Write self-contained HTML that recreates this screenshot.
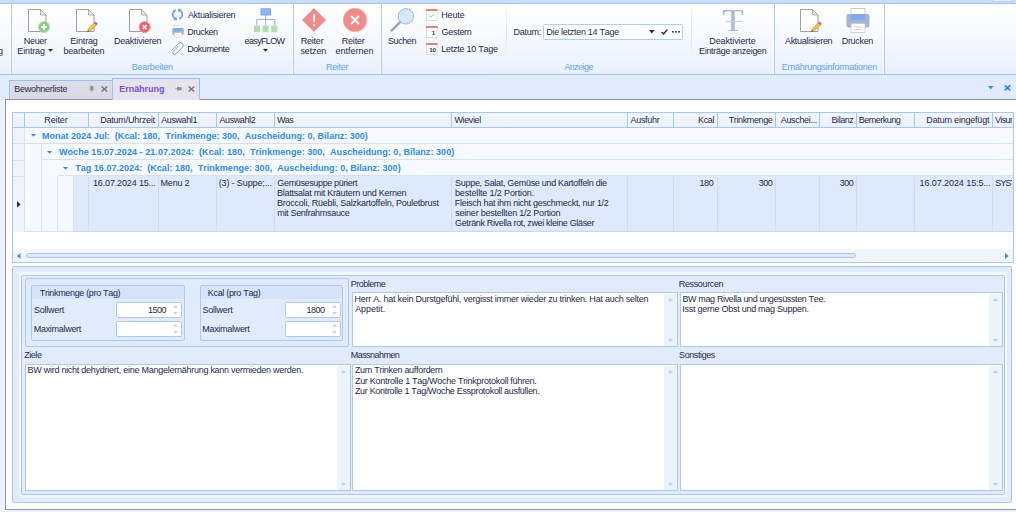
<!DOCTYPE html>
<html><head><meta charset="utf-8">
<style>
*{box-sizing:border-box;margin:0;padding:0}
html,body{width:1016px;height:512px;overflow:hidden;background:#ecf2fd}
body{font-family:"Liberation Sans",sans-serif;font-size:9px;letter-spacing:-0.28px;color:#1e2a4a;position:relative;line-height:10px;font-kerning:none}
.a{position:absolute;white-space:pre}
.c{text-align:center}
.r{text-align:right}
#top{left:0;top:0;width:1016px;height:4px;background:#cadcfa;border-bottom:1px solid #a6c5f6}
#rib{left:0;top:4px;width:1016px;height:70px;background:linear-gradient(#ffffff 0%,#f7fafe 40%,#ebf2fd 100%)}
.sep{width:1px;top:4px;height:70px;background:#b0ccf6}
.sepl{width:1px;top:8px;height:50px;background:linear-gradient(#f3f7fe,#d3e2f9,#f3f7fe)}
.gl{color:#5fa2f3}
#tabs{left:0;top:75px;width:1016px;height:25px;background:#e1ebfd}
.tab{top:80px;height:20px;background:linear-gradient(#dedeea,#d9d9e6);border:1px solid #9dbdf3;border-bottom:none}
#content{left:5px;top:99px;width:1016px;height:411px;background:#fff;border:1px solid #949292}
.gt{color:#2f8bf0}
.pn{border:1px solid #adc8f5;background:#e1ebfc}
.ta{border:1px solid #adc8f5;background:#fff}
.sb{width:13px;background:#edf3fd}
.in{border:1px solid #adc8f5;background:#fff;height:15px;border-radius:1.5px}
</style></head><body>
<div class="a" id="top"></div>
<div class="a" style="left:992px;top:0;width:21px;height:2px;background:#e6ebf4;border:1px solid #bccfee;border-top:none"></div>
<div class="a" id="rib"></div>
<div class="a" style="left:0;top:60px;width:1016px;height:14px;background:linear-gradient(#eef4fe,#e8f0fd)"></div>
<div class="a" style="left:0;top:73.5px;width:1016px;height:1.5px;background:#a3c4f6"></div>
<div class="a" style="left:10px;top:5px;width:1px;height:69px;background:rgba(255,255,255,0.7)"></div>
<div class="a sep" style="left:11px"></div>
<div class="a" style="left:292px;top:5px;width:1px;height:69px;background:rgba(255,255,255,0.7)"></div>
<div class="a sep" style="left:293px"></div>
<div class="a" style="left:380px;top:5px;width:1px;height:69px;background:rgba(255,255,255,0.7)"></div>
<div class="a sep" style="left:381px"></div>
<div class="a" style="left:773px;top:5px;width:1px;height:69px;background:rgba(255,255,255,0.7)"></div>
<div class="a sep" style="left:774px"></div>
<div class="a" style="left:883px;top:5px;width:1px;height:69px;background:rgba(255,255,255,0.7)"></div>
<div class="a sep" style="left:884px"></div>
<div class="a sepl" style="left:506px"></div>
<div class="a sepl" style="left:691px"></div>
<div class="a" style="left:-2px;top:46px">g</div>
<div class="a " style="left:23.76px;top:36px;letter-spacing:-0.306px;">Neuer</div>
<div class="a " style="left:17.36px;top:46px;letter-spacing:-0.150px;">Eintrag</div>
<svg width="5" height="3" viewBox="0 0 5 3" style="position:absolute;left:47.9px;top:49.3px;overflow:visible"><path d="M0 0H5L2.5 2.8Z" fill="#1e2a4a"/></svg>
<div class="a " style="left:70.26px;top:36px;letter-spacing:-0.158px;">Eintrag</div>
<div class="a " style="left:63.42px;top:46px;letter-spacing:-0.152px;">bearbeiten</div>
<div class="a " style="left:114.01px;top:36px;letter-spacing:-0.223px;">Deaktivieren</div>
<div class="a " style="left:187.88px;top:10px;letter-spacing:-0.319px;">Aktualisieren</div>
<div class="a " style="left:187.16px;top:27px;letter-spacing:-0.432px;">Drucken</div>
<div class="a " style="left:187.16px;top:44px;letter-spacing:-0.442px;">Dokumente</div>
<div class="a " style="left:244.62px;top:36px;letter-spacing:-0.657px;">easyFLOW</div>
<svg width="5" height="3" viewBox="0 0 5 3" style="position:absolute;left:262.6px;top:48.8px;overflow:visible"><path d="M0 0H5L2.5 2.8Z" fill="#1e2a4a"/></svg>
<div class="a " style="left:300.66px;top:36px;letter-spacing:-0.204px;">Reiter</div>
<div class="a " style="left:300.50px;top:46px;letter-spacing:-0.136px;">setzen</div>
<div class="a " style="left:341.76px;top:36px;letter-spacing:-0.204px;">Reiter</div>
<div class="a " style="left:335.52px;top:46px;letter-spacing:0.005px;">entfernen</div>
<div class="a " style="left:387.99px;top:36px;letter-spacing:-0.406px;">Suchen</div>
<div class="a " style="left:441.26px;top:10px;letter-spacing:-0.157px;">Heute</div>
<div class="a " style="left:441.55px;top:27px;letter-spacing:-0.288px;">Gestern</div>
<div class="a " style="left:441.26px;top:44px;letter-spacing:-0.262px;">Letzte 10 Tage</div>
<div class="a " style="left:513.51px;top:27px;letter-spacing:-0.240px;">Datum:</div>
<div class="a in" style="left:543px;top:24px;width:140px;height:15.5px;border-color:#b0ccf6"></div>
<div class="a " style="left:546.26px;top:27px;letter-spacing:-0.287px;">Die letzten 14 Tage</div>
<div class="a " style="left:709.26px;top:36px;letter-spacing:-0.103px;">Deaktivierte</div>
<div class="a " style="left:699.01px;top:46px;letter-spacing:-0.296px;">Einträge anzeigen</div>
<div class="a " style="left:784.98px;top:36px;letter-spacing:-0.327px;">Aktualisieren</div>
<div class="a " style="left:841.76px;top:36px;letter-spacing:-0.323px;">Drucken</div>
<div class="a gl" style="left:131.76px;top:62px;letter-spacing:-0.245px;">Bearbeiten</div>
<div class="a gl" style="left:326.01px;top:62px;letter-spacing:-0.324px;">Reiter</div>
<div class="a gl" style="left:564.23px;top:62px;letter-spacing:-0.559px;">Anzeige</div>
<div class="a gl" style="left:781.76px;top:62px;letter-spacing:-0.249px;">Ernährungsinformationen</div>
<div class="a" id="tabs"></div>
<div class="a" id="content"></div>
<div class="a tab" style="left:9px;width:103.5px;height:19px"></div>
<div class="a tab" style="left:112px;width:88px;top:78px;height:22px;background:#e4e3ee"></div>
<div class="a " style="left:14.26px;top:84px;letter-spacing:-0.283px;">Bewohnerliste</div>
<div class="a " style="left:119.15px;top:83.5px;letter-spacing:-0.006px;font-weight:bold;color:#7a4fd0;">Ernährung</div>
<div class="a" style="left:12px;top:112.0px;width:1001px;height:151px;background:#fff"></div>
<div class="a" style="left:12.5px;top:112.0px;width:1000.5px;height:15.6px;background:linear-gradient(#f3f7fe,#eaf1fd);border-bottom:1px solid #a9c6f5"></div>
<div class="a" style="left:24.0px;top:112.5px;width:1px;height:15px;background:#a9c6f5"></div>
<div class="a" style="left:88.0px;top:112.5px;width:1px;height:15px;background:#a9c6f5"></div>
<div class="a" style="left:157.5px;top:112.5px;width:1px;height:15px;background:#a9c6f5"></div>
<div class="a" style="left:216.0px;top:112.5px;width:1px;height:15px;background:#a9c6f5"></div>
<div class="a" style="left:274.0px;top:112.5px;width:1px;height:15px;background:#a9c6f5"></div>
<div class="a" style="left:451.0px;top:112.5px;width:1px;height:15px;background:#a9c6f5"></div>
<div class="a" style="left:626.5px;top:112.5px;width:1px;height:15px;background:#a9c6f5"></div>
<div class="a" style="left:673.0px;top:112.5px;width:1px;height:15px;background:#a9c6f5"></div>
<div class="a" style="left:716.5px;top:112.5px;width:1px;height:15px;background:#a9c6f5"></div>
<div class="a" style="left:774.5px;top:112.5px;width:1px;height:15px;background:#a9c6f5"></div>
<div class="a" style="left:818.5px;top:112.5px;width:1px;height:15px;background:#a9c6f5"></div>
<div class="a" style="left:856.0px;top:112.5px;width:1px;height:15px;background:#a9c6f5"></div>
<div class="a" style="left:914.0px;top:112.5px;width:1px;height:15px;background:#a9c6f5"></div>
<div class="a" style="left:992.0px;top:112.5px;width:1px;height:15px;background:#a9c6f5"></div>
<div class="a " style="left:44.26px;top:114.7px;letter-spacing:-0.124px;">Reiter</div>
<div class="a " style="left:100.26px;top:114.7px;letter-spacing:-0.226px;">Datum/Uhrzeit</div>
<div class="a " style="left:161.23px;top:114.7px;letter-spacing:-0.402px;">Auswahl1</div>
<div class="a " style="left:219.38px;top:114.7px;letter-spacing:-0.379px;">Auswahl2</div>
<div class="a " style="left:277.06px;top:114.7px;letter-spacing:-0.700px;">Was</div>
<div class="a " style="left:454.46px;top:114.7px;letter-spacing:-0.377px;">Wieviel</div>
<div class="a " style="left:630.48px;top:114.7px;letter-spacing:-0.292px;">Ausfuhr</div>
<div class="a " style="left:698.06px;top:114.7px;letter-spacing:-0.389px;">Kcal</div>
<div class="a " style="left:728.70px;top:114.7px;letter-spacing:-0.380px;">Trinkmenge</div>
<div class="a " style="left:780.73px;top:114.7px;letter-spacing:-0.326px;">Auschei...</div>
<div class="a " style="left:831.56px;top:114.7px;letter-spacing:-0.445px;">Bilanz</div>
<div class="a " style="left:858.66px;top:114.7px;letter-spacing:-0.488px;">Bemerkung</div>
<div class="a " style="left:926.36px;top:114.7px;letter-spacing:-0.210px;">Datum eingefügt</div>
<div class="a" style="left:994.9px;top:114.7px;width:17.6px;overflow:hidden;letter-spacing:-0.6px">Visum</div>
<div class="a" style="left:12.5px;top:127.5px;width:12.5px;height:104.7px;background:#f2f4f9;border-right:1px solid #d3e1fa"></div>
<div class="a" style="left:12.5px;top:143.25px;width:12px;height:1px;background:#d3e1fa"></div>
<div class="a" style="left:24.5px;top:127.6px;width:988.0px;height:16.150000000000006px;background:#f6f9fe;border-bottom:1px solid #d3e1fa"></div>
<svg class="a" style="left:30.5px;top:134.47500000000002px" width="5" height="3"><path d="M0 0h5L2.5 2.8z" fill="#2f8bf0"/></svg>
<div class="a gt" style="left:41.90px;top:130.97500000000002px;letter-spacing:0.025px;font-weight:bold;">Monat 2024 Jul:  (Kcal: 180,  Trinkmenge: 300,  Auscheidung: 0, Bilanz: 300)</div>
<div class="a" style="left:12.5px;top:159.5px;width:12px;height:1px;background:#d3e1fa"></div>
<div class="a" style="left:41px;top:143.75px;width:971.5px;height:16.25px;background:#f6f9fe;border-left:1px solid #d3e1fa;border-bottom:1px solid #d3e1fa"></div>
<svg class="a" style="left:47px;top:150.675px" width="5" height="3"><path d="M0 0h5L2.5 2.8z" fill="#2f8bf0"/></svg>
<div class="a gt" style="left:58.99px;top:147.175px;letter-spacing:0.062px;font-weight:bold;">Woche 15.07.2024 - 21.07.2024:  (Kcal: 180,  Trinkmenge: 300,  Auscheidung: 0, Bilanz: 300)</div>
<div class="a" style="left:12.5px;top:175.8px;width:12px;height:1px;background:#d3e1fa"></div>
<div class="a" style="left:57px;top:160.0px;width:955.5px;height:16.30000000000001px;background:#f6f9fe;border-left:1px solid #d3e1fa;border-bottom:1px solid #d3e1fa"></div>
<svg class="a" style="left:63px;top:166.95000000000002px" width="5" height="3"><path d="M0 0h5L2.5 2.8z" fill="#2f8bf0"/></svg>
<div class="a gt" style="left:75.20px;top:163.45000000000002px;letter-spacing:0.031px;font-weight:bold;">Tag 16.07.2024:  (Kcal: 180,  Trinkmenge: 300,  Auscheidung: 0, Bilanz: 300)</div>
<div class="a" style="left:24.5px;top:143.75px;width:16.5px;height:88.25px;background:#f6f9fe;border-bottom:1px solid #d3e1fa"></div>
<div class="a" style="left:41px;top:160.0px;width:16.5px;height:72.0px;background:#f6f9fe;border-left:1px solid #d3e1fa;border-bottom:1px solid #d3e1fa"></div>
<div class="a" style="left:57px;top:176.3px;width:16.5px;height:55.69999999999999px;background:#f6f9fe;border-left:1px solid #d3e1fa;border-bottom:1px solid #d3e1fa"></div>
<div class="a" style="left:73px;top:176.3px;width:939.5px;height:55.7px;background:#dee9fc;border-left:1px solid #d3e1fa;border-bottom:1px solid #c3d7f8"></div>
<div class="a" style="left:88.0px;top:176.5px;width:1px;height:55px;background:#cbdcf9"></div>
<div class="a" style="left:157.5px;top:176.5px;width:1px;height:55px;background:#cbdcf9"></div>
<div class="a" style="left:216.0px;top:176.5px;width:1px;height:55px;background:#cbdcf9"></div>
<div class="a" style="left:274.0px;top:176.5px;width:1px;height:55px;background:#cbdcf9"></div>
<div class="a" style="left:451.0px;top:176.5px;width:1px;height:55px;background:#cbdcf9"></div>
<div class="a" style="left:626.5px;top:176.5px;width:1px;height:55px;background:#cbdcf9"></div>
<div class="a" style="left:673.0px;top:176.5px;width:1px;height:55px;background:#cbdcf9"></div>
<div class="a" style="left:716.5px;top:176.5px;width:1px;height:55px;background:#cbdcf9"></div>
<div class="a" style="left:774.5px;top:176.5px;width:1px;height:55px;background:#cbdcf9"></div>
<div class="a" style="left:818.5px;top:176.5px;width:1px;height:55px;background:#cbdcf9"></div>
<div class="a" style="left:856.0px;top:176.5px;width:1px;height:55px;background:#cbdcf9"></div>
<div class="a" style="left:914.0px;top:176.5px;width:1px;height:55px;background:#cbdcf9"></div>
<div class="a" style="left:992.0px;top:176.5px;width:1px;height:55px;background:#cbdcf9"></div>
<div class="a " style="left:93.01px;top:178px;letter-spacing:-0.150px;">16.07.2024 15...</div>
<div class="a " style="left:160.56px;top:178px;letter-spacing:-0.206px;">Menu 2</div>
<div class="a " style="left:218.64px;top:178px;letter-spacing:-0.125px;">(3) - Suppe;...</div>
<div class="a " style="left:277.35px;top:178px;letter-spacing:-0.357px;">Gemüsesuppe püriert</div>
<div class="a " style="left:277.06px;top:188px;letter-spacing:-0.247px;">Blattsalat mit Kräutern und Kernen</div>
<div class="a " style="left:277.06px;top:198px;letter-spacing:-0.240px;">Broccoli, Rüebli, Salzkartoffeln, Pouletbrust</div>
<div class="a " style="left:277.20px;top:208px;letter-spacing:-0.308px;">mit Senfrahmsauce</div>
<div class="a " style="left:455.09px;top:178px;letter-spacing:-0.305px;">Suppe, Salat, Gemüse und Kartoffeln die</div>
<div class="a " style="left:454.92px;top:188px;letter-spacing:-0.131px;">bestellte 1/2 Portion.</div>
<div class="a " style="left:454.76px;top:198px;letter-spacing:-0.287px;">Fleisch hat ihm nicht geschmeckt, nur 1/2</div>
<div class="a " style="left:455.25px;top:208px;letter-spacing:-0.226px;">seiner bestellten 1/2 Portion</div>
<div class="a " style="left:455.05px;top:218px;letter-spacing:-0.346px;">Getränk Rivella rot, zwei kleine Gläser</div>
<div class="a " style="left:699.41px;top:178px;letter-spacing:-0.290px;">180</div>
<div class="a " style="left:758.66px;top:178px;letter-spacing:-0.461px;">300</div>
<div class="a " style="left:839.66px;top:178px;letter-spacing:-0.461px;">300</div>
<div class="a " style="left:919.61px;top:178px;letter-spacing:-0.086px;">16.07.2024 15:5...</div>
<div class="a" style="left:995.3px;top:178px;width:17.2px;overflow:hidden;letter-spacing:-0.9px">SYST</div>
<svg class="a" style="left:16.8px;top:201.1px" width="4" height="7"><path d="M0 0L3.5 3.4L0 6.8z" fill="#1e2a4a"/></svg>
<div class="a" style="left:12.5px;top:249.0px;width:1000px;height:13px;background:#f1f6fe"></div>
<div class="a" style="left:25.5px;top:252.8px;width:830px;height:5.6px;border:1px solid #a9c6f5;border-radius:3px;background:#dbe7fc"></div>
<svg class="a" style="left:17px;top:252.5px" width="4" height="6"><path d="M3.5 0L0 3L3.5 6z" fill="#2f8bf0"/></svg>
<svg class="a" style="left:1004.5px;top:252.5px" width="4" height="6"><path d="M0 0L3.5 3L0 6z" fill="#2f8bf0"/></svg>
<div class="a" style="left:12px;top:111.5px;width:1001.5px;height:151.3px;border:1px solid #a9c6f5"></div>
<div class="a pn" style="left:12px;top:266px;width:1000px;height:237px;background:#e1ebfc;border-radius:2px"></div>
<div class="a" style="left:18.5px;top:272px;width:988.5px;height:225px;background:#f2f6fe"></div>
<div class="a pn" style="left:21px;top:275px;width:984px;height:219.5px;background:#e1ebfc;border-radius:2px"></div>
<div class="a pn" style="left:25px;top:278px;width:324px;height:68.5px;background:#e1ebfc;border-radius:2px"></div>
<div class="a pn" style="left:31px;top:284.5px;width:153.5px;height:56px;background:#e1ebfc;border-radius:2px"></div>
<div class="a" style="left:32px;top:285.5px;width:151.5px;height:13px;background:#d5e3fb"></div>
<div class="a " style="left:39.80px;top:287.5px;letter-spacing:-0.330px;">Trinkmenge (pro Tag)</div>
<div class="a " style="left:34.09px;top:305px;letter-spacing:-0.255px;">Sollwert</div>
<div class="a " style="left:33.76px;top:323.5px;letter-spacing:-0.295px;">Maximalwert</div>
<div class="a in" style="left:116px;top:302.2px;width:66.0px;height:15.7px"></div>
<svg class="a" style="left:172.7px;top:305.4px" width="5" height="10"><path d="M0 2.8L2.5 0L5 2.8z M0 7L2.5 9.8L5 7z" fill="#bcd2f7"/></svg>
<div class="a in" style="left:116px;top:321.2px;width:66.0px;height:15.7px"></div>
<svg class="a" style="left:172.7px;top:324.4px" width="5" height="10"><path d="M0 2.8L2.5 0L5 2.8z M0 7L2.5 9.8L5 7z" fill="#bcd2f7"/></svg>
<div class="a " style="left:148.06px;top:305px;letter-spacing:-0.495px;">1500</div>
<div class="a pn" style="left:199.5px;top:284.5px;width:143px;height:56px;background:#e1ebfc;border-radius:2px"></div>
<div class="a" style="left:200.5px;top:285.5px;width:141px;height:13px;background:#d5e3fb"></div>
<div class="a " style="left:207.76px;top:287.5px;letter-spacing:-0.306px;">Kcal (pro Tag)</div>
<div class="a " style="left:202.59px;top:305px;letter-spacing:-0.255px;">Sollwert</div>
<div class="a " style="left:202.26px;top:323.5px;letter-spacing:-0.295px;">Maximalwert</div>
<div class="a in" style="left:285.0px;top:302.2px;width:56.0px;height:15.7px"></div>
<svg class="a" style="left:331.7px;top:305.4px" width="5" height="10"><path d="M0 2.8L2.5 0L5 2.8z M0 7L2.5 9.8L5 7z" fill="#bcd2f7"/></svg>
<div class="a in" style="left:285.0px;top:321.2px;width:56.0px;height:15.7px"></div>
<svg class="a" style="left:331.7px;top:324.4px" width="5" height="10"><path d="M0 2.8L2.5 0L5 2.8z M0 7L2.5 9.8L5 7z" fill="#bcd2f7"/></svg>
<div class="a " style="left:306.56px;top:305px;letter-spacing:-0.495px;">1800</div>
<div class="a " style="left:350.76px;top:279px;letter-spacing:-0.519px;">Probleme</div>
<div class="a ta" style="left:352px;top:292.4px;width:325.5px;height:54.6px"></div>
<div class="a " style="left:354.46px;top:294px;letter-spacing:-0.237px;">Herr A. hat kein Durstgefühl, vergisst immer wieder zu trinken. Hat auch selten</div>
<div class="a " style="left:355.18px;top:304px;letter-spacing:-0.069px;">Appetit.</div>
<div class="a sb" style="left:663.5px;top:294.4px;height:51.6px"></div>
<svg class="a" style="left:667.5px;top:298.4px" width="5" height="3"><path d="M0 3L2.5 0L5 3z" fill="#b3ccf6"/></svg>
<svg class="a" style="left:667.5px;top:339.0px" width="5" height="3"><path d="M0 0L2.5 3L5 0z" fill="#b3ccf6"/></svg>
<div class="a " style="left:678.76px;top:279px;letter-spacing:-0.356px;">Ressourcen</div>
<div class="a ta" style="left:680px;top:292.4px;width:323px;height:54.6px"></div>
<div class="a " style="left:682.46px;top:294px;letter-spacing:-0.368px;">BW mag Rivella und ungesüssten Tee.</div>
<div class="a " style="left:682.37px;top:304px;letter-spacing:-0.264px;">Isst gerne Obst und mag Suppen.</div>
<div class="a sb" style="left:989px;top:294.4px;height:51.6px"></div>
<svg class="a" style="left:993px;top:298.4px" width="5" height="3"><path d="M0 3L2.5 0L5 3z" fill="#b3ccf6"/></svg>
<svg class="a" style="left:993px;top:339.0px" width="5" height="3"><path d="M0 0L2.5 3L5 0z" fill="#b3ccf6"/></svg>
<div class="a " style="left:24.21px;top:350px;letter-spacing:-0.455px;">Ziele</div>
<div class="a ta" style="left:25px;top:364px;width:325.5px;height:126.5px"></div>
<div class="a " style="left:27.46px;top:365px;letter-spacing:-0.259px;">BW wird nicht dehydriert, eine Mangelernährung kann vermieden werden.</div>
<div class="a sb" style="left:336.5px;top:366px;height:123.5px"></div>
<svg class="a" style="left:340.5px;top:370px" width="5" height="3"><path d="M0 3L2.5 0L5 3z" fill="#b3ccf6"/></svg>
<svg class="a" style="left:340.5px;top:482.5px" width="5" height="3"><path d="M0 0L2.5 3L5 0z" fill="#b3ccf6"/></svg>
<div class="a " style="left:350.76px;top:350px;letter-spacing:-0.550px;">Massnahmen</div>
<div class="a ta" style="left:352px;top:364px;width:325.5px;height:126.5px"></div>
<div class="a " style="left:354.91px;top:365px;letter-spacing:-0.294px;">Zum Trinken auffordern</div>
<div class="a " style="left:354.91px;top:376px;letter-spacing:-0.271px;">Zur Kontrolle 1 Tag/Woche Trinkprotokoll führen.</div>
<div class="a " style="left:354.91px;top:386px;letter-spacing:-0.317px;">Zur Kontrolle 1 Tag/Woche Essprotokoll ausfüllen.</div>
<div class="a sb" style="left:663.5px;top:366px;height:123.5px"></div>
<svg class="a" style="left:667.5px;top:370px" width="5" height="3"><path d="M0 3L2.5 0L5 3z" fill="#b3ccf6"/></svg>
<svg class="a" style="left:667.5px;top:482.5px" width="5" height="3"><path d="M0 0L2.5 3L5 0z" fill="#b3ccf6"/></svg>
<div class="a " style="left:679.09px;top:350px;letter-spacing:-0.411px;">Sonstiges</div>
<div class="a ta" style="left:680px;top:364px;width:323px;height:126.5px"></div>
<div class="a sb" style="left:989px;top:366px;height:123.5px"></div>
<svg class="a" style="left:993px;top:370px" width="5" height="3"><path d="M0 3L2.5 0L5 3z" fill="#b3ccf6"/></svg>
<svg class="a" style="left:993px;top:482.5px" width="5" height="3"><path d="M0 0L2.5 3L5 0z" fill="#b3ccf6"/></svg>
<svg class="a" style="left:27.5px;top:9px;overflow:visible" width="19" height="23" viewBox="0 0 19 23"><path d="M0.5 0.5H12.5L18 6V22.5H0.5Z" fill="#fff" stroke="#9a9fa8" stroke-width="1"/><path d="M12.5 0.5V6H18Z" fill="#e6e9ed" stroke="#9a9fa8" stroke-width="0.8"/><circle cx="16" cy="18" r="5.5" fill="#8acb8a" stroke="#b4deb4" stroke-width="1"/><path d="M13 18H19M16 15V21" stroke="#fff" stroke-width="1.6"/></svg>
<svg class="a" style="left:76px;top:9px;overflow:visible" width="19" height="23" viewBox="0 0 19 23"><path d="M0.5 0.5H12.5L18 6V22.5H0.5Z" fill="#fff" stroke="#9a9fa8" stroke-width="1"/><path d="M12.5 0.5V6H18Z" fill="#e6e9ed" stroke="#9a9fa8" stroke-width="0.8"/><g transform="translate(11.5,22.8) rotate(-45)"><path d="M0 0L3 -1.6H11V1.6H3Z" fill="#f2c24e" stroke="#b98f2e" stroke-width="0.5"/><path d="M11 -1.6H13V1.6H11Z" fill="#e8505b"/><path d="M0 0L1.6 -0.9V0.9Z" fill="#444"/></g></svg>
<svg class="a" style="left:128.8px;top:9px;overflow:visible" width="19" height="23" viewBox="0 0 19 23"><path d="M0.5 0.5H12.5L18 6V22.5H0.5Z" fill="#fff" stroke="#9a9fa8" stroke-width="1"/><path d="M12.5 0.5V6H18Z" fill="#e6e9ed" stroke="#9a9fa8" stroke-width="0.8"/><circle cx="15.7" cy="18.1" r="5.5" fill="#ea5f68" stroke="#f29aa0" stroke-width="1"/><path d="M13.7 16.1L17.7 20.1M17.7 16.1L13.7 20.1" stroke="#fff" stroke-width="1.5"/></svg>
<svg class="a" style="left:171px;top:8px;overflow:visible" width="13" height="13" viewBox="0 0 13 13"><g fill="none" stroke="#639fec" stroke-width="1.5"><path d="M4.86 1.99A4.8 4.8 0 0 0 3.75 10.43"/><path d="M8.14 11.01A4.8 4.8 0 0 0 9.25 2.57"/></g><path d="M2.3 12.3L5.2 8.5L6.2 12.1Z" fill="#639fec"/><path d="M10.7 0.7L7.8 4.5L6.8 0.9Z" fill="#639fec"/></svg>
<svg class="a" style="left:171.5px;top:25px;overflow:visible" width="12.0" height="12.5" viewBox="0 0 12.0 12.5"><g transform="scale(0.5)"><rect x="5" y="0.5" width="14" height="7" fill="#fff" stroke="#b8bec8" stroke-width="0.8"/><rect x="0.5" y="6" width="23" height="13.5" rx="2" fill="#a4b5cf"/><rect x="5" y="6" width="14" height="6" fill="#7eaaf0"/><rect x="5" y="15.5" width="14" height="9" fill="#fff" stroke="#c2c8d2" stroke-width="0.8"/><path d="M8 19H16M8 21.5H16" stroke="#d0d4da" stroke-width="1"/></g></svg>
<svg class="a" style="left:846px;top:8px;overflow:visible" width="24.0" height="25.0" viewBox="0 0 24.0 25.0"><g transform="scale(1.0)"><rect x="5" y="0.5" width="14" height="7" fill="#fff" stroke="#b8bec8" stroke-width="0.8"/><rect x="0.5" y="6" width="23" height="13.5" rx="2" fill="#a4b5cf"/><rect x="5" y="6" width="14" height="6" fill="#7eaaf0"/><rect x="5" y="15.5" width="14" height="9" fill="#fff" stroke="#c2c8d2" stroke-width="0.8"/><path d="M8 19H16M8 21.5H16" stroke="#d0d4da" stroke-width="1"/></g></svg>
<svg class="a" style="left:171px;top:43.5px;overflow:visible" width="13" height="13" viewBox="0 0 13 13"><g transform="rotate(45 6.5 6.5) scale(0.92)" fill="none" stroke="#7f9fd6" stroke-width="1"><path d="M4.5 2.5V11A2 2 0 0 0 8.5 11V1A3 3 0 0 0 2.5 1V12"/></g></svg>
<svg class="a" style="left:253px;top:8px;overflow:visible" width="26" height="25" viewBox="0 0 26 25"><path d="M12.7 7V17.5M3.8 17.5V11.4H21.8V17.5" fill="none" stroke="#a6aeba" stroke-width="1"/><rect x="8" y="0.8" width="9.5" height="6.2" fill="#8fb6f2" stroke="#6b9ce8" stroke-width="0.8"/><rect x="1" y="17.6" width="6" height="6.6" fill="#b4deb2"/><rect x="9.5" y="17.6" width="6" height="6.6" fill="#b4deb2"/><rect x="18.3" y="17.6" width="6" height="6.6" fill="#b4deb2"/></svg>
<svg class="a" style="left:301.6px;top:8px;overflow:visible" width="24" height="24" viewBox="0 0 24 24"><path d="M12 0.2L23.8 12L12 23.8L0.2 12Z" fill="#f08b8b" stroke="#f4a9a9" stroke-width="0.6"/><text x="12" y="18.2" font-size="17" text-anchor="middle" fill="#fff" font-family="Liberation Sans, sans-serif" letter-spacing="0">!</text></svg>
<svg class="a" style="left:343px;top:8px;overflow:visible" width="24" height="24" viewBox="0 0 24 24"><circle cx="12" cy="12" r="11.8" fill="#f08b8b" stroke="#f4a9a9" stroke-width="0.6"/><path d="M8 8L16 16M16 8L8 16" stroke="#fff" stroke-width="1.8"/></svg>
<svg class="a" style="left:390px;top:8px;overflow:visible" width="25" height="25" viewBox="0 0 25 25"><path d="M9.8 14.4L1.6 22.6" stroke="#94a8bc" stroke-width="2.4" stroke-linecap="round"/><circle cx="15.9" cy="8.3" r="7.7" fill="#d3e9fb" stroke="#9db2c6" stroke-width="0.9"/></svg>
<svg class="a" style="left:426.4px;top:9px;overflow:visible" width="12" height="12" viewBox="0 0 12 12"><rect x="0.4" y="0.4" width="10.7" height="11" fill="#fff" stroke="#cfd3da" stroke-width="0.8"/><rect x="0" y="0" width="11.5" height="2" fill="#ee7b7b"/><path d="M3.1 6.5L4.9 8.3L8.4 4.6" fill="none" stroke="#6fbf6f" stroke-width="0.9"/></svg>
<svg class="a" style="left:426.4px;top:26px;overflow:visible" width="12" height="12" viewBox="0 0 12 12"><rect x="0.4" y="0.4" width="10.7" height="11" fill="#fff" stroke="#cfd3da" stroke-width="0.8"/><rect x="0" y="0" width="11.5" height="2" fill="#ee7b7b"/><text x="7.4" y="9.1" font-size="6.2" font-weight="bold" text-anchor="middle" fill="#333" font-family="Liberation Sans, sans-serif" letter-spacing="0">1</text></svg>
<svg class="a" style="left:426.4px;top:43px;overflow:visible" width="12" height="12" viewBox="0 0 12 12"><rect x="0.4" y="0.4" width="10.7" height="11" fill="#fff" stroke="#cfd3da" stroke-width="0.8"/><rect x="0" y="0" width="11.5" height="2" fill="#ee7b7b"/><text x="6.6" y="9.1" font-size="6.2" font-weight="bold" text-anchor="middle" fill="#333" font-family="Liberation Sans, sans-serif" letter-spacing="-0.2">10</text></svg>
<svg class="a" style="left:649px;top:30px;overflow:visible" width="6" height="4" viewBox="0 0 6 4"><path d="M0 0H5.5L2.75 3.5Z" fill="#1e2a4a"/></svg>
<svg class="a" style="left:660.5px;top:28.5px;overflow:visible" width="7" height="6" viewBox="0 0 7 6"><path d="M0.6 3L2.6 5L6.2 0.6" fill="none" stroke="#1e2a4a" stroke-width="1.5"/></svg>
<svg class="a" style="left:672px;top:30.5px;overflow:visible" width="8" height="2" viewBox="0 0 8 2"><rect x="0" y="0" width="1.6" height="1.6" fill="#1e2a4a"/><rect x="3.1" y="0" width="1.6" height="1.6" fill="#1e2a4a"/><rect x="6.2" y="0" width="1.6" height="1.6" fill="#1e2a4a"/></svg>
<div class="a" style="left:721.4px;top:2px;width:24px;text-align:center;font-family:'Liberation Serif',serif;font-size:32.5px;line-height:36px;letter-spacing:0;color:#a9bbcf;transform:scaleX(1.07)">T</div>
<div class="a" style="left:725.6px;top:20.8px;width:16.4px;height:0.9px;background:#c3d0df"></div>
<svg class="a" style="left:800px;top:9px;overflow:visible" width="19" height="23" viewBox="0 0 19 23"><path d="M0.5 0.5H12.5L18 6V22.5H0.5Z" fill="#fff" stroke="#9a9fa8" stroke-width="1"/><path d="M12.5 0.5V6H18Z" fill="#e6e9ed" stroke="#9a9fa8" stroke-width="0.8"/><g transform="translate(11.5,22.8) rotate(-45)"><path d="M0 0L3 -1.6H11V1.6H3Z" fill="#f2c24e" stroke="#b98f2e" stroke-width="0.5"/><path d="M11 -1.6H13V1.6H11Z" fill="#e8505b"/><path d="M0 0L1.6 -0.9V0.9Z" fill="#444"/></g></svg>
<svg class="a" style="left:88.5px;top:86px;overflow:visible" width="6" height="6.5" viewBox="0 0 6 6.5"><g fill="none" stroke="#958b87" stroke-width="0.8"><path d="M1.7 0.4H4.1V3.4H1.7Z" fill="#958b87"/><path d="M0.4 3.8H5.4M2.9 3.8V6.3"/></g></svg>
<svg class="a" style="left:101px;top:86px;overflow:visible" width="7" height="6" viewBox="0 0 7 6"><path d="M0.6 0.4L6.2 5.6M6.2 0.4L0.6 5.6" stroke="#7d7470" stroke-width="1.4"/></svg>
<svg class="a" style="left:174.5px;top:85.5px;overflow:visible" width="7" height="6" viewBox="0 0 7 6"><g fill="none" stroke="#958b87" stroke-width="0.8"><path d="M3 1.5H6.2V3.9H3Z" fill="#958b87"/><path d="M2.6 0.4V5M0.2 2.7H2.6"/></g></svg>
<svg class="a" style="left:187.5px;top:86px;overflow:visible" width="7" height="6" viewBox="0 0 7 6"><path d="M0.6 0.4L6.2 5.6M6.2 0.4L0.6 5.6" stroke="#7d7470" stroke-width="1.4"/></svg>
<svg class="a" style="left:988px;top:86px;overflow:visible" width="6" height="4" viewBox="0 0 6 4"><path d="M0 0H5.6L2.8 3.6Z" fill="#3b8af0"/></svg>
<svg class="a" style="left:1003.5px;top:85px;overflow:visible" width="7" height="6" viewBox="0 0 7 6"><path d="M0.8 0.4L6.2 5.4M6.2 0.4L0.8 5.4" stroke="#2f7fee" stroke-width="1.7"/></svg>
</body></html>
